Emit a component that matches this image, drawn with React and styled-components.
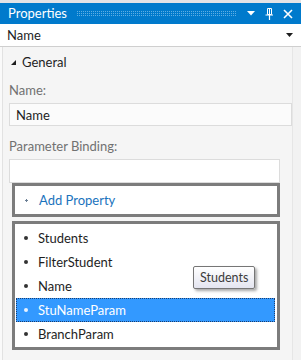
import React from "react";
import styled, { createGlobalStyle } from "styled-components";

const Global = createGlobalStyle`
  html, body { margin: 0; padding: 0; }
  body { font-family: "Lato", "Noto Sans", sans-serif; background: #f5f5f5; }
`;

const FS = "12.5px";

const Frame = styled.div`
  width: 301px;
  height: 360px;
  display: flex;
  flex-direction: column;
  background: #f5f5f5;
  border-top: 3px solid #e3e3e6;
  box-sizing: border-box;
  overflow: hidden;
  font-size: ${FS};
`;

const TitleBar = styled.div`
  height: 21px;
  background: #007acc;
  display: flex;
  align-items: center;
  padding: 0 8px 0 8px;
  gap: 6px;
  color: #fff;
`;

const Title = styled.span`
  font-size: 13px;
  line-height: 21px;
`;

const Grip = styled.div`
  flex: 1;
  height: 5px;
  margin: 0 4px 0 4px;
  background-color: #5eaee3;
  background-image: linear-gradient(90deg, transparent 1px, #007acc 1px),
    linear-gradient(transparent 1px, #007acc 1px);
  background-size: 2px 2px;
`;

const IconBtn = styled.svg`
  display: block;
  flex: none;
`;

const Combo = styled.div`
  height: 22px;
  background: #fff;
  border-bottom: 1px solid #cfcfcf;
  display: flex;
  align-items: center;
  padding: 0 8px 0 7px;
  color: #1e1e1e;
  font-size: 13px;
`;

const ComboText = styled.span`
  flex: 1;
`;

const Body = styled.div`
  flex: 1;
  display: flex;
  min-height: 0;
`;

const LeftEdge = styled.div`
  width: 3px;
  background: #fafafa;
  border-right: 1px solid #e2e2e2;
  box-sizing: border-box;
`;

const Content = styled.div`
  flex: 1;
  display: flex;
  flex-direction: column;
  position: relative;
`;

const RightEdge = styled.div`
  width: 9px;
  background: #f2f2f2;
  border-left: 1px solid #e6e6e6;
  box-sizing: border-box;
`;

const GroupHeader = styled.div`
  display: flex;
  align-items: center;
  height: 18px;
  margin-top: 6px;
  padding-left: 8px;
  gap: 6px;
  color: #1e1e1e;
  font-size: 13px;
`;

const Label = styled.div`
  color: #717171;
  font-size: 13px;
  padding-left: 6px;
  margin-top: ${(p) => p.$top}px;
  line-height: 18px;
`;

const TextBox = styled.div`
  margin-left: 6px;
  margin-right: ${(p) => p.$right}px;
  margin-top: ${(p) => p.$top}px;
  height: ${(p) => p.$h}px;
  box-sizing: border-box;
  border: 1px solid #dcdcdc;
  background: ${(p) => p.$bg};
  display: flex;
  align-items: center;
  padding-left: 6px;
  color: #1e1e1e;
  font-size: 13px;
`;

const Outlined = styled.div`
  margin-left: 9px;
  margin-right: 12px;
  margin-top: ${(p) => p.$top}px;
  border: 3px solid #7c7c7c;
  background: #fff;
  box-sizing: border-box;
  height: ${(p) => p.$h}px;
  display: flex;
  flex-direction: column;
  padding: ${(p) => p.$pad};
`;

const AddRow = styled.div`
  flex: 1;
  display: flex;
  align-items: center;
  padding-left: 10px;
  gap: 11px;
  color: #1a73bd;
  font-size: 13px;
`;

const Plus = styled.span`
  position: relative;
  width: 3px;
  height: 3px;
  flex: none;
  &::before, &::after {
    content: "";
    position: absolute;
    background: #6b7f95;
  }
  &::before { left: 1px; top: 0; width: 1px; height: 3px; }
  &::after { left: 0; top: 1px; width: 3px; height: 1px; }
`;

const Item = styled.div`
  height: 24px;
  display: flex;
  align-items: center;
  gap: 10px;
  margin: 0 0 0 1px;
  padding-left: 7px;
  box-sizing: border-box;
  color: ${(p) => (p.$sel ? "#fff" : "#1e1e1e")};
  background: ${(p) => (p.$sel ? "#3399ff" : "transparent")};
  border: 1px ${(p) => (p.$sel ? "dotted #1c3d6e" : "solid transparent")};
  font-size: 13px;
`;

const Bullet = styled.span`
  width: 4px;
  height: 4px;
  border-radius: 50%;
  background: ${(p) => (p.$sel ? "#e8f2ff" : "#333")};
  flex: none;
`;

const Tooltip = styled.div`
  position: absolute;
  left: 190px;
  top: 219px;
  height: 23px;
  box-sizing: border-box;
  padding: 0 6px;
  display: flex;
  align-items: center;
  border: 1px solid #767676;
  border-radius: 2px;
  background: linear-gradient(#ffffff, #e4e5f0);
  box-shadow: 2px 2px 3px rgba(0, 0, 0, 0.35);
  color: #3c3c3c;
  font-size: 12.5px;
`;

const items = ["Students", "FilterStudent", "Name", "StuNameParam", "BranchParam"];

export default function App() {
  return (
    <>
      <Global />
      <Frame>
        <TitleBar>
          <Title>Properties</Title>
          <Grip />
          <IconBtn width="8" height="5" viewBox="0 0 8 5">
            <path d="M0 0H8L4 4.5Z" fill="#fff" />
          </IconBtn>
          <IconBtn width="8" height="12" viewBox="0 0 8 12" style={{ marginLeft: 4 }}>
            <path d="M2.5 0.5H6.5V6.5H2.5Z M4.5 0.5V6.5" fill="none" stroke="#fff" strokeWidth="1" />
            <path d="M0.5 7H8M4.5 7V12" stroke="#fff" strokeWidth="1.2" />
          </IconBtn>
          <IconBtn width="10" height="10" viewBox="0 0 10 10" style={{ marginLeft: 4 }}>
            <path d="M1 1L9 9M9 1L1 9" stroke="#fff" strokeWidth="1.6" />
          </IconBtn>
        </TitleBar>
        <Combo>
          <ComboText>Name</ComboText>
          <IconBtn width="7" height="4" viewBox="0 0 7 4">
            <path d="M0 0H7L3.5 4Z" fill="#1e1e1e" />
          </IconBtn>
        </Combo>
        <Body>
          <LeftEdge />
          <Content>
            <GroupHeader>
              <IconBtn width="5" height="5" viewBox="0 0 5 5">
                <path d="M5 0V5H0Z" fill="#1e1e1e" />
              </IconBtn>
              General
            </GroupHeader>
            <Label $top={10}>Name:</Label>
            <TextBox $top={4} $h={23} $right={0} $bg="#fbfbfb">Name</TextBox>
            <Label $top={11}>Parameter Binding:</Label>
            <TextBox $top={4} $h={24} $right={12} $bg="#ffffff" />
            <Outlined $top={0} $h={34} $pad="0">
              <AddRow>
                <Plus />
                Add Property
              </AddRow>
            </Outlined>
            <Outlined $top={4} $h={129} $pad="2px 2px 0 0">
              {items.map((t) => (
                <Item key={t} $sel={t === "StuNameParam"}>
                  <Bullet $sel={t === "StuNameParam"} />
                  {t}
                </Item>
              ))}
            </Outlined>
            <Tooltip>Students</Tooltip>
          </Content>
          <RightEdge />
        </Body>
      </Frame>
    </>
  );
}
